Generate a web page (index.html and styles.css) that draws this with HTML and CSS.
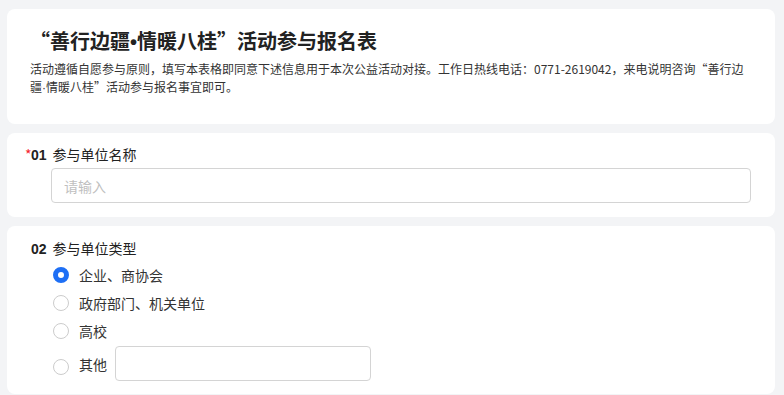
FILE: index.html
```html
<!DOCTYPE html>
<html lang="zh">
<head>
<meta charset="utf-8">
<link rel="stylesheet" href="styles.css">
</head>
<body>
<div class="page">
  <section class="card head">
    <h1 class="title">“善行边疆<span class="dot">•</span>情暖八桂”活动参与报名表</h1>
    <p class="desc">活动遵循自愿参与原则，填写本表格即同意下述信息用于本次公益活动对接。工作日热线电话：0771-2619042，来电说明咨询“善行边疆<span class="dot">·</span>情暖八桂”活动参与报名事宜即可。</p>
  </section>
  <section class="card q">
    <div class="qlabel"><span class="req">*</span><span class="num">01</span><span class="qtext">参与单位名称</span></div>
    <div class="input"><span class="ph">请输入</span></div>
  </section>
  <section class="card q q2">
    <div class="qlabel"><span class="num">02</span><span class="qtext">参与单位类型</span></div>
    <div class="options">
      <div class="opt"><span class="radio on"></span><span class="olabel">企业、商协会</span></div>
      <div class="opt"><span class="radio"></span><span class="olabel">政府部门、机关单位</span></div>
      <div class="opt"><span class="radio"></span><span class="olabel">高校</span></div>
      <div class="opt other"><span class="radio"></span><span class="olabel">其他</span><span class="oinput"></span></div>
    </div>
  </section>
</div>
</body>
</html>
```
FILE: styles.css
```css
html, body {
  margin: 0;
  padding: 0;
  background: #f3f4f6;
}
body {
  font-family: "Noto Sans CJK SC", "Noto Sans", sans-serif;
  color: #1f1f1f;
}
.page {
  padding: 9px 9px 0 7px;
  display: flex;
  flex-direction: column;
  gap: 9px;
}
.card {
  background: #fff;
  border-radius: 8px;
}
.head {
  height: 115px;
  box-sizing: border-box;
  padding: 17px 30px 0 23px;
}
.title {
  margin: 0;
  font-size: 20px;
  font-weight: 700;
  line-height: 30px;
  color: #222;
}
.dot {
  font-family: "Liberation Sans", sans-serif;
}
.desc {
  margin: 3px 0 0;
  font-size: 12px;
  line-height: 18px;
  color: #333;
  width: 720px;
}
.q {
  padding: 9px 24px 12px 18px;
  height: 84px;
  box-sizing: border-box;
}
.qlabel {
  display: flex;
  align-items: baseline;
  font-size: 14px;
  line-height: 24px;
  color: #222;
}
.req {
  color: #f5222d;
  width: 6px;
  font-weight: 400;
}
.num {
  font-weight: 700;
  margin-right: 6px;
  font-family: "Liberation Sans", sans-serif;
}
.q2 .qlabel { padding-left: 6px; }
.input {
  margin: 1px 0 0 26px;
  height: 35px;
  box-sizing: border-box;
  border: 1px solid #d4d4d4;
  border-radius: 4px;
  padding: 0 12px;
  display: flex;
  align-items: center;
}
.ph {
  color: #bfbfbf;
  font-size: 14px;
}
.q2 {
  height: 168px;
  padding-top: 10px;
}
.options {
  margin: 0 0 0 28px;
  display: flex;
  flex-direction: column;
}
.opt {
  display: flex;
  align-items: center;
  height: 28px;
  font-size: 14px;
  color: #333;
}
.radio {
  width: 16px;
  height: 16px;
  box-sizing: border-box;
  border: 1.5px solid #cccccc;
  border-radius: 50%;
  margin-right: 10px;
  flex: none;
}
.radio.on {
  border: 5px solid #1e6ff5;
  background: #fff;
}
.opt.other {
  height: 36px;
  margin-top: 1px;
  align-items: flex-start;
}
.opt.other .radio { margin-top: 13px; }
.opt.other .olabel { margin-top: 8px; }
.oinput {
  margin-left: 8px;
  width: 256px;
  height: 35px;
  box-sizing: border-box;
  border: 1px solid #d4d4d4;
  border-radius: 4px;
}
```
